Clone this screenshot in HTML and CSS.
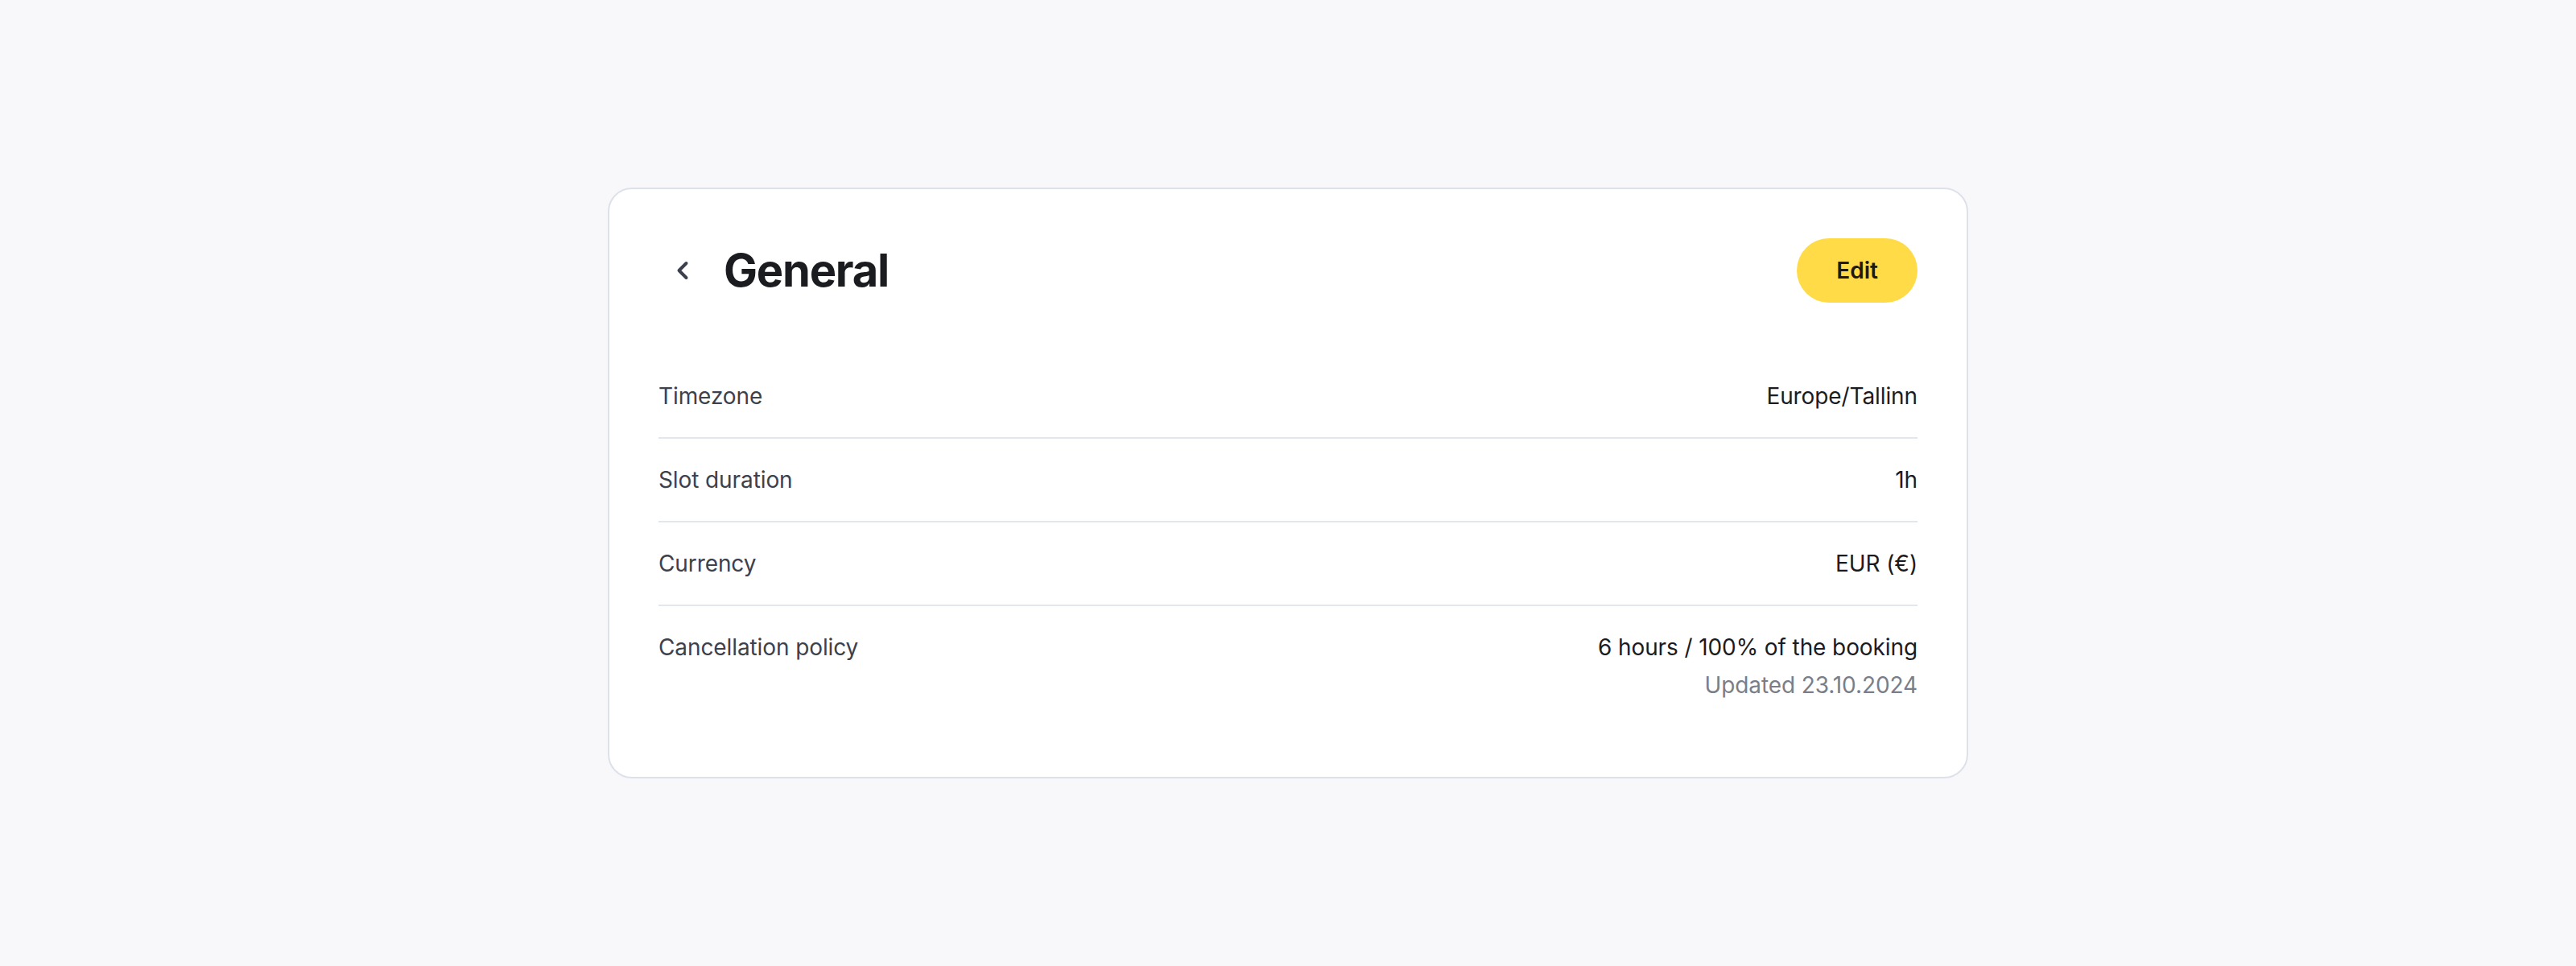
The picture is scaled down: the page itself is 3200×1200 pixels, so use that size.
FILE: index.html
```html
<!DOCTYPE html>
<html lang="en">
<head>
<meta charset="utf-8">
<title>General</title>
<link rel="stylesheet" href="styles.css">
</head>
<body>
<main class="page">
  <section class="card">
    <header class="card-header">
      <div class="title-group">
        <button class="back" aria-label="Back">
          <svg viewBox="0 0 24 24" width="36" height="36" fill="none" stroke="currentColor" stroke-width="2.6" stroke-linecap="round" stroke-linejoin="round"><path d="m15 18-6-6 6-6"/></svg>
        </button>
        <h1 class="title">General</h1>
      </div>
      <button class="edit">Edit</button>
    </header>
    <dl class="rows">
      <div class="row">
        <dt class="label">Timezone</dt>
        <dd class="value">Europe/Tallinn</dd>
      </div>
      <div class="row">
        <dt class="label">Slot duration</dt>
        <dd class="value">1h</dd>
      </div>
      <div class="row">
        <dt class="label">Currency</dt>
        <dd class="value">EUR (€)</dd>
      </div>
      <div class="row">
        <dt class="label">Cancellation policy</dt>
        <dd class="value">
          <div>6 hours / 100% of the booking</div>
          <div class="sub">Updated 23.10.2024</div>
        </dd>
      </div>
    </dl>
  </section>
</main>
</body>
</html>
```

FILE: styles.css
```css
* { box-sizing: border-box; }
html, body { margin: 0; padding: 0; }
body {
  background: #f8f8fa;
  font-family: Inter, "Noto Sans", sans-serif;
  color: #1b1c1f;
}
.page {
  height: 1200px;
  display: flex;
  align-items: center;
  justify-content: center;
}
.card {
  width: 1690px;
  background: #ffffff;
  border: 2px solid #dde1ea;
  border-radius: 30px;
  padding: 60px 61px 63px;
}
.card-header {
  display: flex;
  align-items: center;
  justify-content: space-between;
  height: 80px;
  margin-top: 1px;
  margin-bottom: 65px;
}
.title-group {
  display: flex;
  align-items: center;
  gap: 21px;
}
.back {
  width: 60px;
  height: 60px;
  display: flex;
  align-items: center;
  justify-content: center;
  border: 0;
  background: transparent;
  padding: 0;
  color: #3b404c;
}
.back svg { display: block; }
.title {
  margin: 0;
  font-size: 56px;
  font-weight: 700;
  letter-spacing: -1.2px;
  color: #1b1c1f;
  line-height: 1;
}
.edit {
  height: 80px;
  padding: 0 49px;
  border: 0;
  border-radius: 40px;
  background: #ffdb47;
  font-family: Inter, "Noto Sans", sans-serif;
  font-size: 28px;
  font-weight: 600;
  color: #1d1a0e;
}
.rows { margin: 0; }
.row {
  display: flex;
  justify-content: space-between;
  align-items: flex-start;
  padding: 30px 0;
  border-bottom: 2px solid #e3e6ed;
  font-size: 28px;
  line-height: 42px;
  letter-spacing: -0.1px;
}
.row:last-child { border-bottom: 0; }
.label {
  margin: 0;
  color: #3d414c;
}
.value {
  margin: 0;
  text-align: right;
  color: #1b1c1f;
}
.sub {
  margin-top: 5px;
  color: #7a7e88;
}
```
